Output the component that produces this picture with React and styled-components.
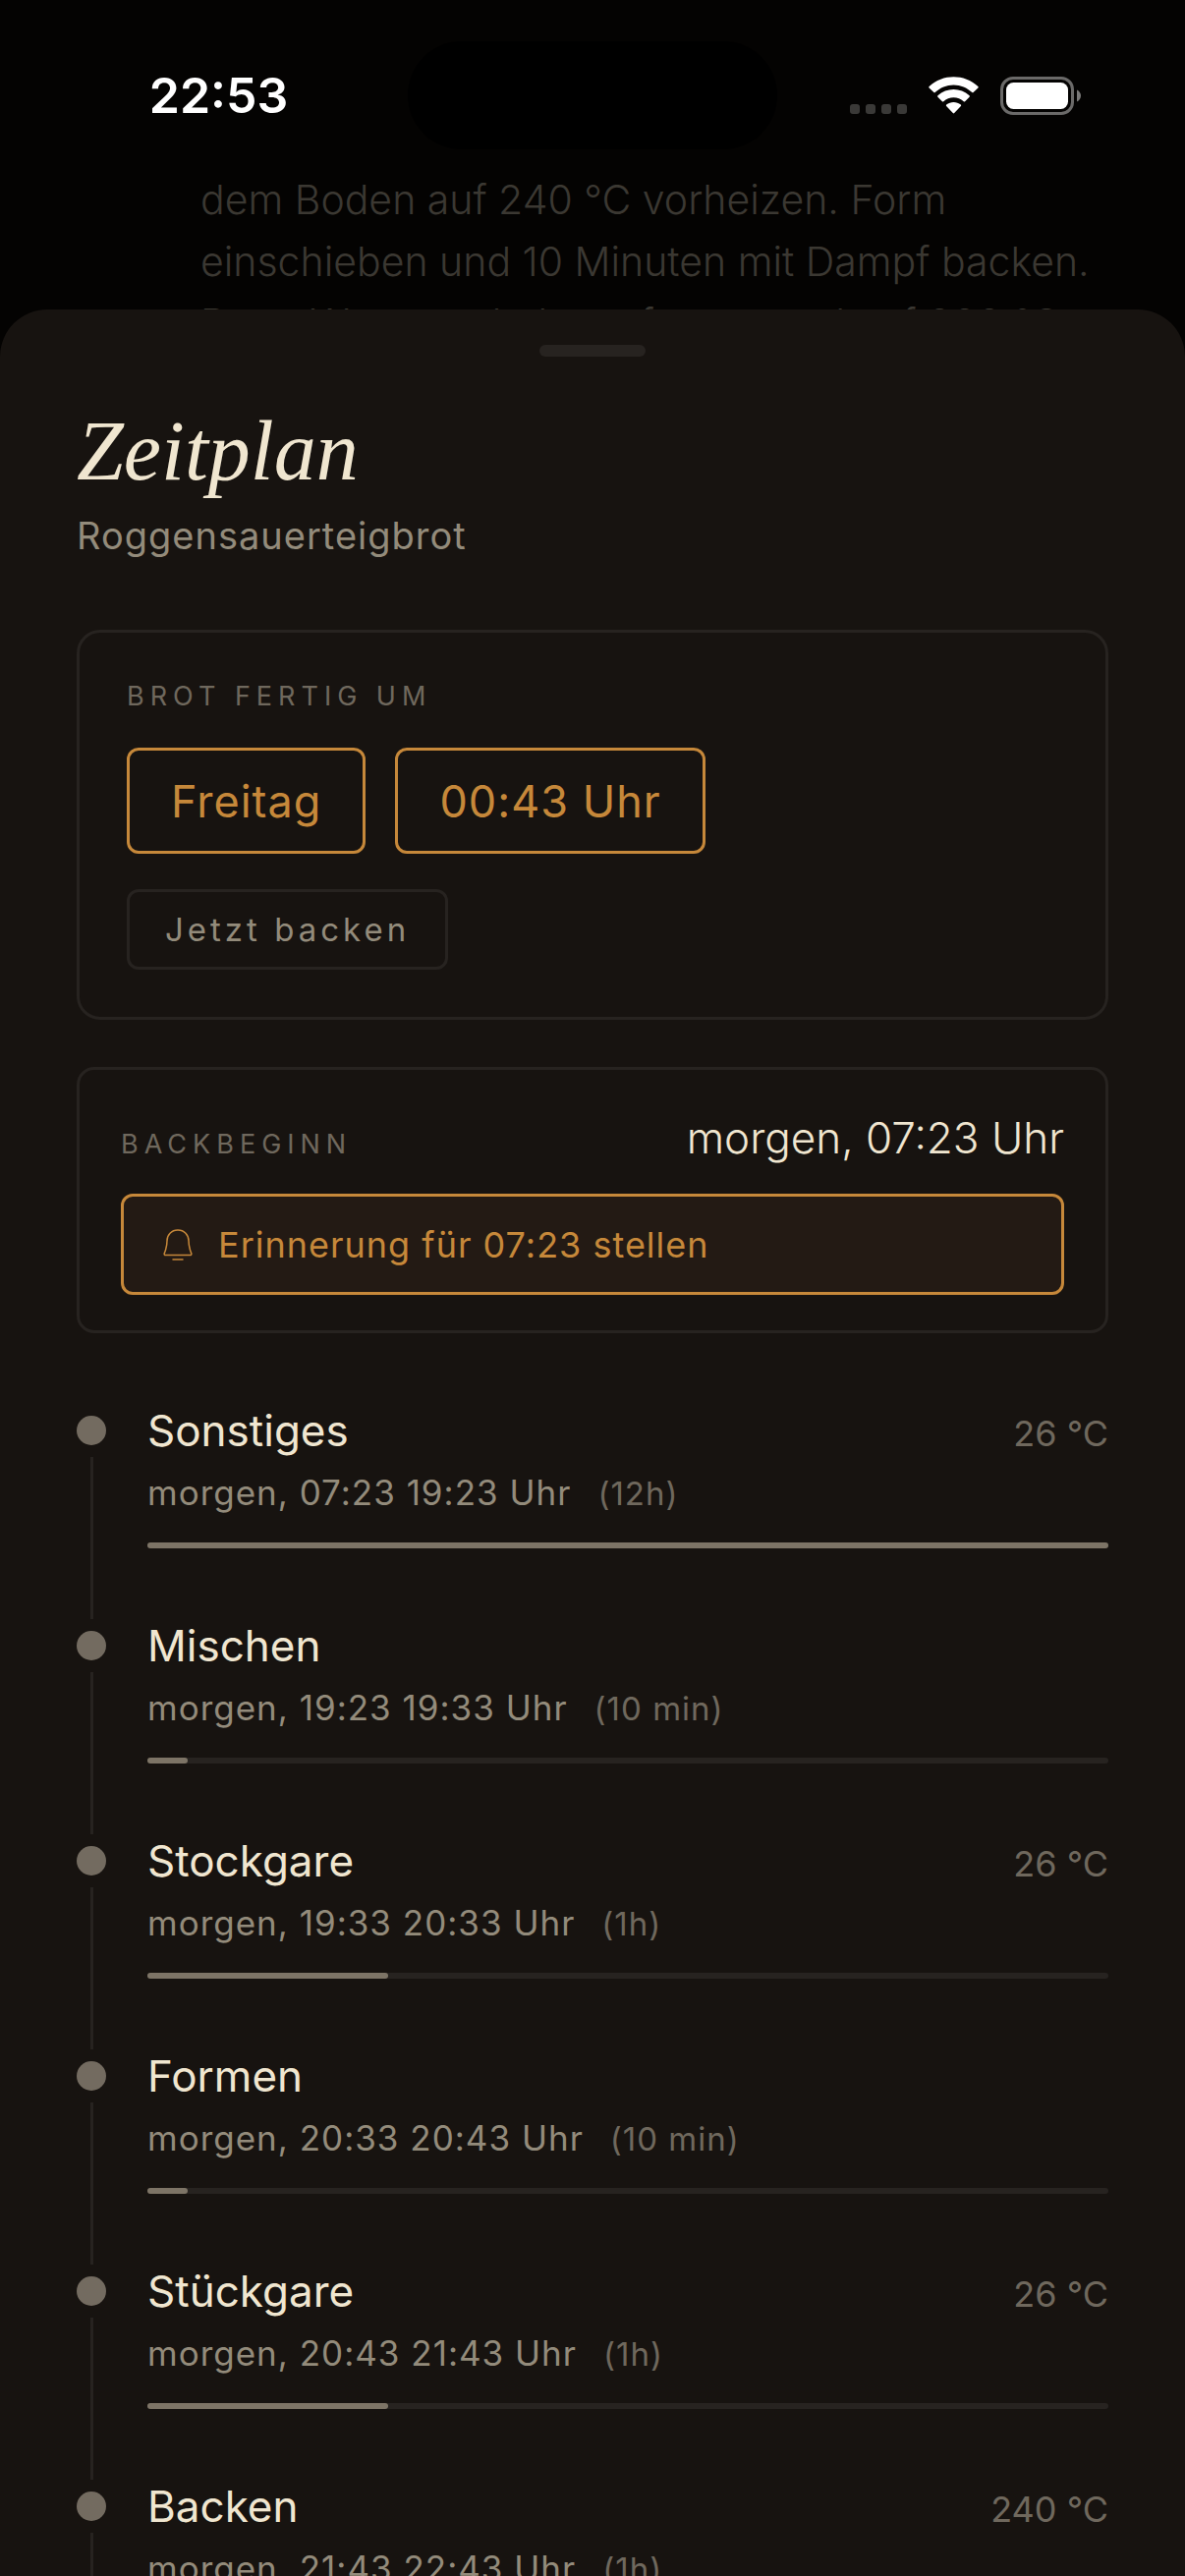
import { Fragment } from "react";
import styled, { createGlobalStyle } from "styled-components";

const steps = [
    { name: "Sonstiges", time: "morgen, 07:23 19:23 Uhr", duration: "(12h)", temp: "26 °C", percent: 100 },
    { name: "Mischen", time: "morgen, 19:23 19:33 Uhr", duration: "(10 min)", percent: 4.17 },
    { name: "Stockgare", time: "morgen, 19:33 20:33 Uhr", duration: "(1h)", temp: "26 °C", percent: 25 },
    { name: "Formen", time: "morgen, 20:33 20:43 Uhr", duration: "(10 min)", percent: 4.17 },
    { name: "Stückgare", time: "morgen, 20:43 21:43 Uhr", duration: "(1h)", temp: "26 °C", percent: 25 },
    { name: "Backen", time: "morgen, 21:43 22:43 Uhr", duration: "(1h)", temp: "240 °C", percent: 25 },
]

const recipeLines = [
    "dem Boden auf 240 °C vorheizen. Form",
    "einschieben und 10 Minuten mit Dampf backen.",
    "Dann Wasserschale entfernen und auf 200 °C",
]

function SignalDots() {
    return (
        <svg width="58" height="38" viewBox="0 0 58 38" fill="#3a3937">
            {[0, 16, 32, 48].map((x) => <rect key={x} x={x} y="28" width="10" height="10" rx="3"/>)}
        </svg>
    )
}

function WifiIcon() {
    return (
        <svg width="51" height="38" viewBox="0 0 51 38" fill="#fff">
            <path d="M25.5 8.5 C32.6 8.5 39.3 11.3 44.3 16.1 C44.7 16.4 45.2 16.4 45.6 16.1 L50.4 11.4 C50.8 11 50.8 10.4 50.4 10 C36.4 -3 14.6 -3 0.6 10 C0.2 10.4 0.2 11 0.6 11.4 L5.4 16.1 C5.8 16.4 6.3 16.4 6.7 16.1 C11.7 11.3 18.4 8.5 25.5 8.5 Z"/>
            <path d="M25.5 21.2 C29.3 21.2 32.9 22.7 35.7 25.2 C36.1 25.6 36.7 25.6 37.1 25.2 L41.6 20.7 C42 20.3 42 19.7 41.6 19.3 C32.5 11 18.5 11 9.4 19.3 C9 19.7 9 20.3 9.4 20.7 L13.9 25.2 C14.3 25.6 14.9 25.6 15.3 25.2 C18.1 22.7 21.7 21.2 25.5 21.2 Z"/>
            <path d="M32.9 30 C33.3 29.6 33.3 29 32.8 28.6 C28.6 25.2 22.4 25.2 18.2 28.6 C17.7 29 17.7 29.6 18.1 30 L24.8 37.1 C25.2 37.5 25.8 37.5 26.2 37.1 Z"/>
        </svg>
    )
}

function BatteryIcon() {
    return (
        <svg width="82" height="39" viewBox="0 0 82 39">
            <rect x="1.5" y="1.5" width="72" height="36" rx="11.5" fill="none" stroke="#6b6a69" strokeWidth="3"/>
            <rect x="6" y="6" width="63" height="27" rx="7.5" fill="#fff"/>
            <path d="M78 13.5 V25.5 C80.4 24.5 82 22.1 82 19.5 C82 16.9 80.4 14.5 78 13.5 Z" fill="#7a7978"/>
        </svg>
    )
}

function BellIcon() {
    return (
        <svg width="30" height="32" viewBox="0 0 30 32" fill="none" stroke="currentColor" strokeWidth="1.5" strokeLinecap="round" strokeLinejoin="round">
            <path d="M15 1 C8.5 1 4 5.8 4 12 C4 18 3 20.5 1.3 24.6 C0.9 25.7 1.4 26.5 2.6 26.5 H27.4 C28.6 26.5 29.1 25.7 28.7 24.6 C27 20.5 26 18 26 12 C26 5.8 21.5 1 15 1 Z"/>
            <path d="M10 31 H20"/>
        </svg>
    )
}

function Step({ step }) {
    return (
        <StepRow>
            <Rail>
                <Dot/>
                <Line/>
            </Rail>
            <StepBody>
                <StepHead>
                    <StepName>{step.name}</StepName>
                    {step.temp && <Temperature>{step.temp}</Temperature>}
                </StepHead>
                <StepTime>
                    {step.time}
                    <Duration>{step.duration}</Duration>
                </StepTime>
                <Track>
                    <Fill style={{ width: `${step.percent}%` }}/>
                </Track>
            </StepBody>
        </StepRow>
    )
}

export default function App() {
    return (
        <Screen>
            <GlobalStyle/>
            <StatusBar>
                <Clock>22:53</Clock>
                <Island/>
                <StatusIcons>
                    <SignalDots/>
                    <WifiIcon/>
                    <BatteryIcon/>
                </StatusIcons>
            </StatusBar>
            <Recipe>
                {recipeLines.map((line) => <Fragment key={line}>{line}<br/></Fragment>)}
            </Recipe>
            <Sheet>
                <Handle/>
                <Title>Zeitplan</Title>
                <Subtitle>Roggensauerteigbrot</Subtitle>
                <ReadyCard>
                    <Label>BROT FERTIG UM</Label>
                    <Pickers>
                        <PickerButton>Freitag</PickerButton>
                        <PickerButton>00:43 Uhr</PickerButton>
                    </Pickers>
                    <NowButton>Jetzt backen</NowButton>
                </ReadyCard>
                <StartCard>
                    <StartRow>
                        <Label>BACKBEGINN</Label>
                        <StartTime>morgen, 07:23 Uhr</StartTime>
                    </StartRow>
                    <ReminderButton>
                        <BellIcon/>
                        Erinnerung für 07:23 stellen
                    </ReminderButton>
                </StartCard>
                <Timeline>
                    {steps.map((step) => <Step key={step.name} step={step}/>)}
                </Timeline>
            </Sheet>
        </Screen>
    )
}

const GlobalStyle = createGlobalStyle`
  * {
    box-sizing: border-box;
  }

  body {
    margin: 0;
    background: #040302;
    font-family: Inter, "Liberation Sans", sans-serif;
  }

  button {
    font-family: inherit;
    background: none;
    cursor: pointer;
  }

  svg {
    display: block;
    flex: none;
  }
`

const Screen = styled.div`
  height: 100vh;
  overflow: hidden;
  display: flex;
  flex-direction: column;
  background: #040302;
`

const StatusBar = styled.header`
  flex: none;
  display: grid;
  grid-template-columns: 1fr 376px 1fr;
  align-items: center;
  height: 172px;
  padding-top: 22px;
`

const Clock = styled.div`
  padding-left: 30px;
  text-align: center;
  color: #fff;
  font-size: 50px;
  font-weight: 600;
  line-height: 60px;
`

const Island = styled.div`
  height: 110px;
  border-radius: 55px;
  background: #000;
`

const StatusIcons = styled.div`
  display: flex;
  align-items: center;
  justify-content: flex-end;
  gap: 22px;
  padding-right: 106px;
`

/* the sheet slides over the recipe, so only the top of its last line shows */
const Recipe = styled.p`
  flex: none;
  height: 143px;
  margin: 0;
  padding-left: 204px;
  overflow: hidden;
  white-space: nowrap;
  color: #3b3832;
  font-size: 41px;
  font-weight: 300;
  line-height: 63px;
`

const Sheet = styled.main`
  flex: 1;
  min-height: 0;
  overflow: hidden;
  padding: 36px 78px 0;
  border-radius: 48px 48px 0 0;
  background: #171310;
`

const Handle = styled.div`
  width: 108px;
  height: 12px;
  margin: 0 auto;
  border-radius: 6px;
  background: #272320;
`

const Title = styled.h1`
  margin: 42px 0 9px;
  color: #f0e6d0;
  font-family: "Liberation Serif", serif;
  font-size: 86px;
  font-style: italic;
  font-weight: 400;
  line-height: 108px;
`

const Subtitle = styled.div`
  margin-bottom: 72px;
  color: #938b7b;
  font-size: 38px;
  letter-spacing: 1px;
  line-height: 47px;
`

const Card = styled.section`
  border: 3px solid #272320;
`

const ReadyCard = styled(Card)`
  padding: 48px;
  border-radius: 24px;
`

const StartCard = styled(Card)`
  margin-top: 48px;
  padding: 42px 42px 36px;
  border-radius: 18px;
`

const Label = styled.div`
  color: #6f685d;
  font-size: 27px;
  letter-spacing: 6px;
  line-height: 33px;
`

const Pickers = styled.div`
  display: flex;
  gap: 30px;
  margin: 36px 0;
`

const PickerButton = styled.button`
  height: 108px;
  padding: 0 42px;
  border: 3px solid #c6883a;
  border-radius: 12px;
  color: #c6883a;
  font-size: 45px;
  letter-spacing: 1px;
`

const NowButton = styled.button`
  display: block;
  height: 82px;
  padding: 0 36px;
  border: 3px solid #272320;
  border-radius: 12px;
  color: #938b7b;
  font-size: 33px;
  letter-spacing: 4px;
`

const StartRow = styled.div`
  display: flex;
  align-items: baseline;
  justify-content: space-between;
  margin-bottom: 30px;
`

const StartTime = styled.div`
  color: #f0e6d0;
  font-size: 44px;
  font-weight: 300;
  line-height: 54px;
`

const ReminderButton = styled.button`
  display: flex;
  align-items: center;
  gap: 26px;
  width: 100%;
  height: 103px;
  padding: 0 40px;
  border: 3px solid #c6883a;
  border-radius: 12px;
  background: #231a14;
  color: #c6883a;
  font-size: 36px;
  letter-spacing: 1px;
`

const Timeline = styled.ol`
  margin: 72px 0 0;
  padding: 0;
  list-style: none;
`

const StepRow = styled.li`
  display: flex;
  gap: 42px;
`

const Rail = styled.div`
  display: flex;
  flex-direction: column;
  align-items: center;
  gap: 12px;
  width: 30px;
  padding-top: 12px;
`

const Dot = styled.div`
  width: 30px;
  height: 30px;
  border-radius: 50%;
  background: #736b60;
`

const Line = styled.div`
  flex: 1;
  width: 3px;
  background: #272320;
`

const StepBody = styled.div`
  flex: 1;
  padding-bottom: 72px;
`

const StepHead = styled.div`
  display: flex;
  align-items: baseline;
  justify-content: space-between;
  height: 54px;
`

const StepName = styled.div`
  color: #f0e6d0;
  font-size: 44px;
  line-height: 54px;
`

const Temperature = styled.div`
  color: #6f685d;
  font-size: 36px;
`

const StepTime = styled.div`
  height: 45px;
  margin: 14px 0 28px;
  color: #938b7b;
  font-size: 35px;
  letter-spacing: 1px;
  line-height: 45px;
`

const Duration = styled.span`
  margin-left: 27px;
  color: #6f685d;
  font-size: 33px;
`

const Track = styled.div`
  height: 6px;
  border-radius: 3px;
  background: #272320;
`

const Fill = styled.div`
  height: 6px;
  border-radius: 3px;
  background: #7d7466;
`
